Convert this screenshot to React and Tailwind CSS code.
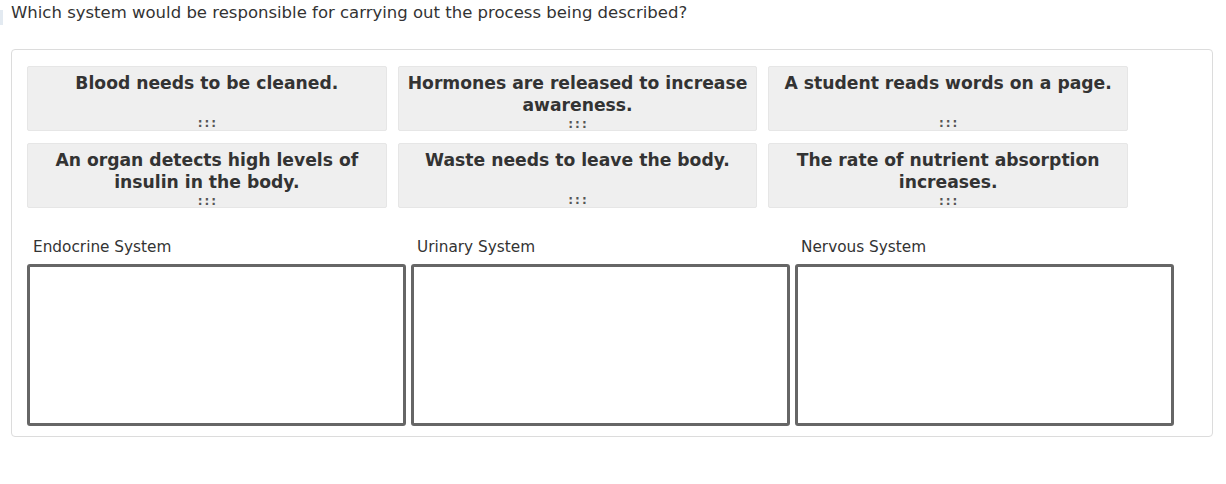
const cards = [
  "Blood needs to be cleaned.",
  "Hormones are released to increase awareness.",
  "A student reads words on a page.",
  "An organ detects high levels of insulin in the body.",
  "Waste needs to leave the body.",
  "The rate of nutrient absorption increases.",
];

const zones = ["Endocrine System", "Urinary System", "Nervous System"];

export default function App() {
  return (
    <div className="relative bg-white text-[#333] min-h-[484px]" style={{ fontFamily: '"DejaVu Sans", Verdana, sans-serif' }}>
      <div className="absolute left-0 top-[10px] h-[15px] w-[3px] bg-[#e3eaf1]" />
      <p className="pl-[11px] pt-[3px] text-[16.5px] leading-[20px] text-[#333]">
        Which system would be responsible for carrying out the process being described?
      </p>

      <div className="ml-[11px] mt-[26px] w-[1202px] rounded-[4px] border border-[#dcdcdc] px-[15px] pt-[16px] pb-[10px]">
        <div className="grid w-[1101px] grid-cols-3 gap-x-[11px] gap-y-[12px]">
          {cards.map((c) => (
            <div
              key={c}
              className="flex h-[65px] flex-col items-center rounded-[2px] border border-[#e6e6e6] bg-[#efefef] px-1 pt-[5px]"
            >
              <div className="h-[44px] text-center text-[17.2px] font-bold leading-[22px] text-[#333]">{c}</div>
              <div className="mt-[1px] text-[12px] font-bold leading-[14px] tracking-[2px] pl-[2px] text-[#555]">:::</div>
            </div>
          ))}
        </div>

        <div className="mt-[29px] flex gap-[5px]">
          {zones.map((z) => (
            <div key={z} className="w-[379px]">
              <div className="pl-[6px] text-[15.3px] leading-[20px] text-[#333]">{z}</div>
              <div className="mt-[7px] h-[162px] rounded-[3px] border-[3px] border-[#666] bg-white" />
            </div>
          ))}
        </div>
      </div>
    </div>
  );
}
